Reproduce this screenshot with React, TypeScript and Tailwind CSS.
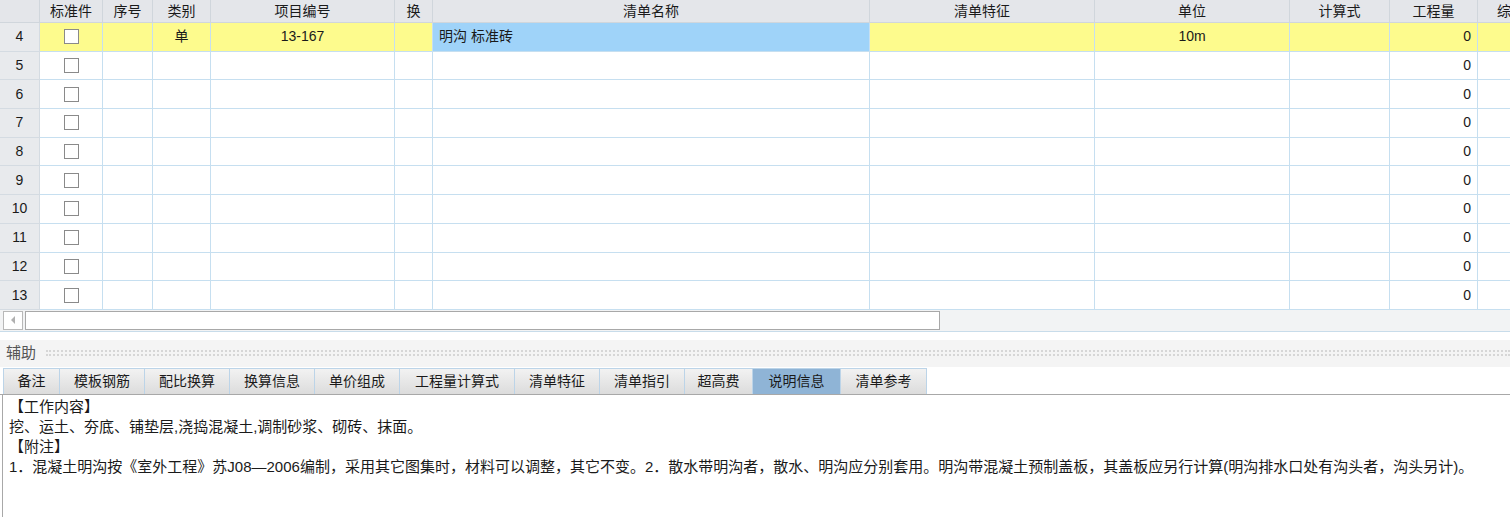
import React from 'react'

const cols = [
  { key: 'no', title: '', w: 'w-[40px]' },
  { key: 'std', title: '标准件', w: 'w-[63px]' },
  { key: 'seq', title: '序号', w: 'w-[50px]' },
  { key: 'type', title: '类别', w: 'w-[58px]' },
  { key: 'code', title: '项目编号', w: 'w-[184px]' },
  { key: 'swap', title: '换', w: 'w-[38px]' },
  { key: 'name', title: '清单名称', w: 'w-[437px]' },
  { key: 'feat', title: '清单特征', w: 'w-[225px]' },
  { key: 'unit', title: '单位', w: 'w-[195px]' },
  { key: 'formula', title: '计算式', w: 'w-[100px]' },
  { key: 'qty', title: '工程量', w: 'w-[88px]' },
  { key: 'price', title: '综合单价', w: 'w-[120px]' },
]

const rows = [4, 5, 6, 7, 8, 9, 10, 11, 12, 13]

const tabs = ['备注', '模板钢筋', '配比换算', '换算信息', '单价组成', '工程量计算式', '清单特征', '清单指引', '超高费', '说明信息', '清单参考']
const tabW = ['w-[57px]', 'w-[85px]', 'w-[85px]', 'w-[85px]', 'w-[85px]', 'w-[115px]', 'w-[85px]', 'w-[85px]', 'w-[68px]', 'w-[88px]', 'w-[86px]']

function Checkbox() {
  return <div className="w-[15px] h-[15px] border border-[#8a8a8a] bg-white" />
}

function Row({ n }: { n: number }) {
  const first = n === 4
  const bg = first ? 'bg-[#fdfb8d]' : 'bg-white'
  return (
    <div className="flex h-[28.7px] shrink-0">
      {cols.map((c) => {
        let content: React.ReactNode = null
        let align = 'justify-center'
        let cellBg = bg
        if (c.key === 'no') {
          cellBg = 'bg-[#e8eaed]'
          content = n
        }
        if (c.key === 'std') content = <Checkbox />
        if (first && c.key === 'type') content = '单'
        if (first && c.key === 'code') content = '13-167'
        if (first && c.key === 'unit') content = '10m'
        if (first && c.key === 'name') {
          content = '明沟 标准砖'
          align = 'justify-start pl-[6px]'
          cellBg = 'bg-[#9fd3f9]'
        }
        if (c.key === 'qty') {
          content = '0'
          align = 'justify-end pr-[6px]'
        }
        return (
          <div
            key={c.key}
            className={`${c.w} shrink-0 flex items-center ${align} ${cellBg} border-r border-b border-[#c6dff0] ${c.key === 'no' ? 'border-[#d4dbe2]' : ''}`}
          >
            {content}
          </div>
        )
      })}
    </div>
  )
}

export default function App() {
  return (
    <div
      className="w-[1510px] h-[517px] overflow-hidden bg-white text-[#1a1a1a] text-[14px] flex flex-col"
      style={{ fontFamily: '"Liberation Sans", "Noto Sans CJK SC", sans-serif' }}
    >
      {/* grid */}
      <div className="flex flex-col overflow-hidden">
        <div className="flex h-[23px] shrink-0 bg-[#e4e6ea]">
          {cols.map((c) => (
            <div
              key={c.key}
              className={`${c.w} shrink-0 flex items-center border-r border-b border-[#d0d6dc] whitespace-nowrap overflow-hidden ${
                c.key === 'price' ? 'justify-start pl-[19px]' : 'justify-center'
              }`}
            >
              {c.title}
            </div>
          ))}
        </div>
        {rows.map((n) => (
          <Row key={n} n={n} />
        ))}
      </div>

      {/* horizontal scrollbar */}
      <div className="flex h-[22px] shrink-0 items-center bg-[#f2f3f4] border-b border-[#c8dcea] pl-[3px] gap-[2px]">
        <div className="w-[20px] h-[19px] border border-[#b8b8b8] bg-white flex items-center justify-center">
          <div className="w-0 h-0 border-y-[4px] border-y-transparent border-r-[4px] border-r-[#b0b0b0]" />
        </div>
        <div className="w-[915px] h-[19px] border border-[#a8a8a8] bg-white" />
      </div>

      <div className="h-[8px] shrink-0" />

      {/* 辅助 bar */}
      <div className="flex h-[27px] shrink-0 items-center bg-[#f4f4f4] pl-[6px] gap-[10px]">
        <span className="text-[15px] text-[#555]">辅助</span>
        <div className="flex-1 h-[6px] border-y-2 border-dotted border-[#d6d6d6]" />
      </div>

      {/* tabs */}
      <div className="flex h-[27px] shrink-0 pl-[3px] mt-[1px] border-b border-[#a8a8a8]">
        {tabs.map((t, i) => (
          <div
            key={t}
            className={`${tabW[i]} shrink-0 flex items-center justify-center border-r border-t border-[#bcd4e8] ${
              i === 0 ? 'border-l' : ''
            } ${t === '说明信息' ? 'bg-[#8fb4d6]' : 'bg-gradient-to-b from-[#f2f2f2] to-[#dcdcdc]'}`}
          >
            {t}
          </div>
        ))}
      </div>

      {/* content */}
      <div className="flex-1 border-l border-[#a8a8a8] ml-[2px] pl-[6px] pt-[2px] text-[15px] leading-[20px] whitespace-nowrap">
        <div>【工作内容】</div>
        <div>挖、运土、夯底、铺垫层,浇捣混凝土,调制砂浆、砌砖、抹面。</div>
        <div>【附注】</div>
        <div>
          1．混凝土明沟按《室外工程》苏J08—2006编制，采用其它图集时，材料可以调整，其它不变。2．散水带明沟者，散水、明沟应分别套用。明沟带混凝土预制盖板，其盖板应另行计算(明沟排水口处有沟头者，沟头另计)。
        </div>
      </div>
    </div>
  )
}
